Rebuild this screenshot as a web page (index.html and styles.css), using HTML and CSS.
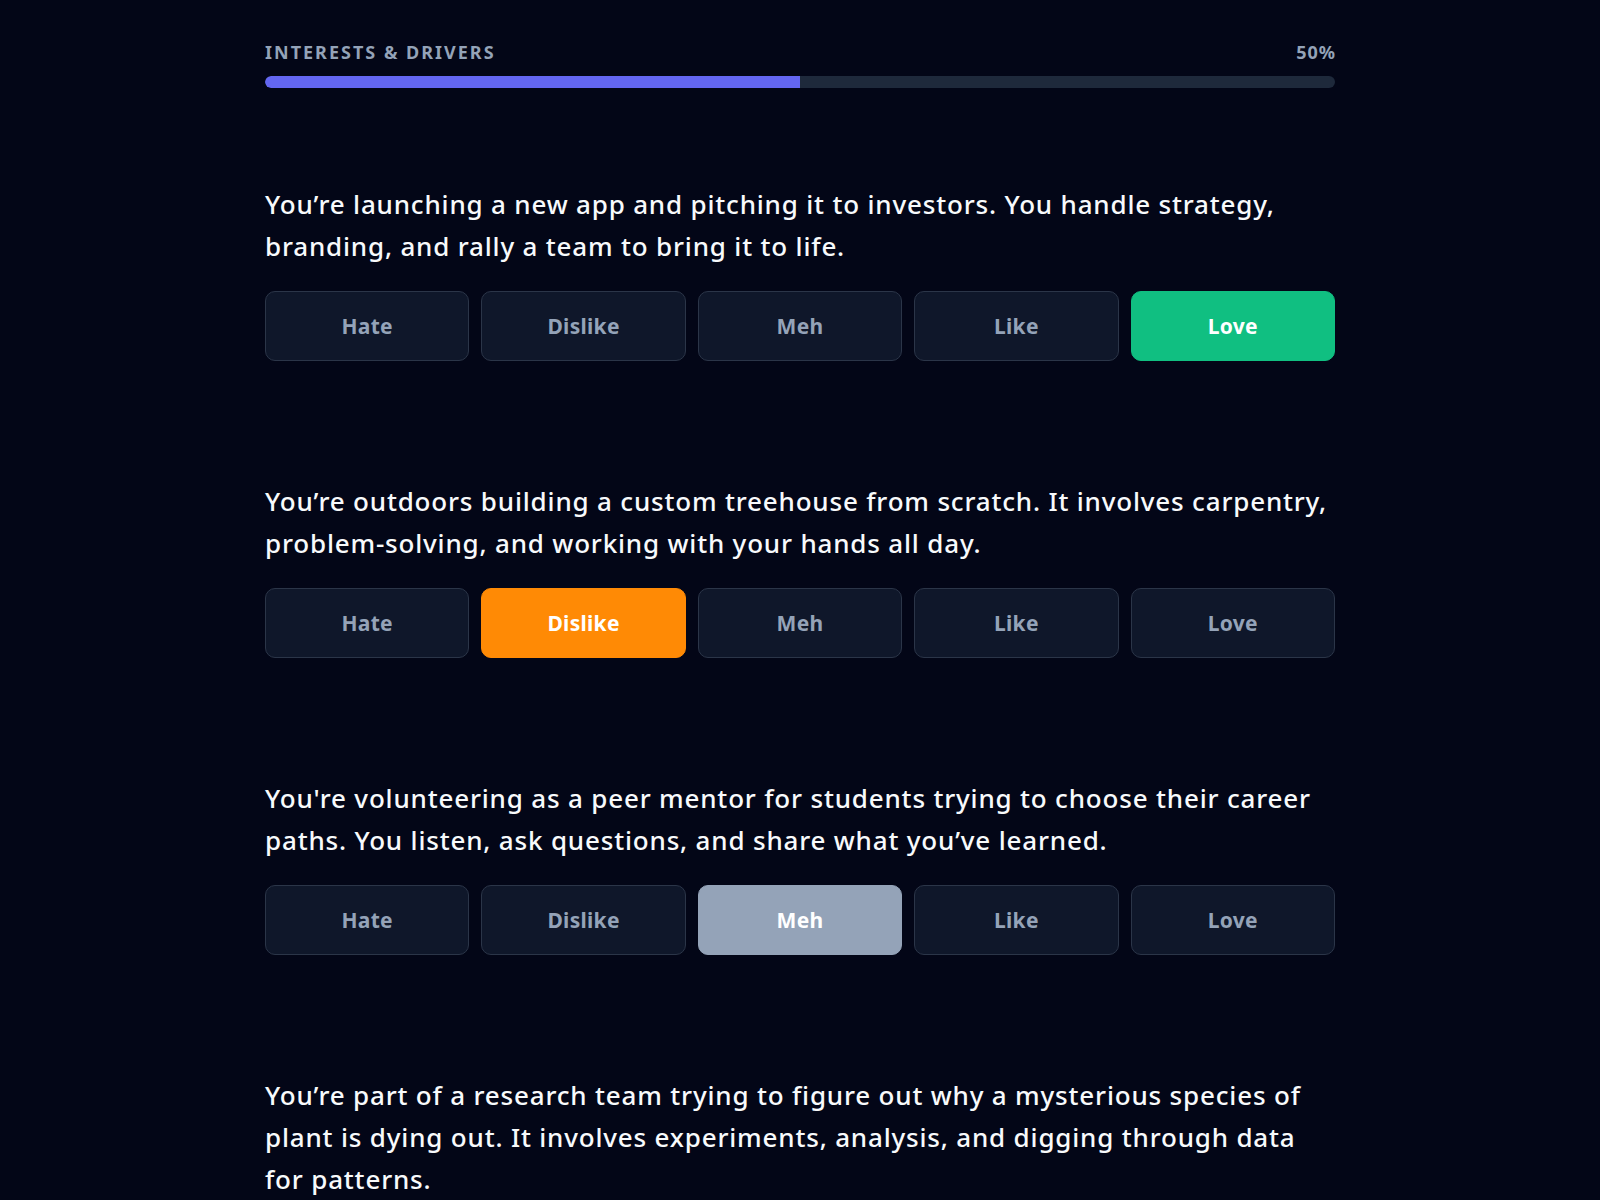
FILE: index.html
```html
<!DOCTYPE html>
<html lang="en">
<head>
<meta charset="utf-8">
<title>Interests &amp; Drivers</title>
<link rel="stylesheet" href="styles.css">
</head>
<body>
<main class="page">
  <header class="progress">
    <div class="progress-head">
      <span class="progress-label">INTERESTS &amp; DRIVERS</span>
      <span class="progress-value">50%</span>
    </div>
    <div class="progress-track"><div class="progress-fill" style="width:50%"></div></div>
  </header>

  <section class="question">
    <p class="prompt">You’re launching a new app and pitching it to investors. You handle strategy, branding, and rally a team to bring it to life.</p>
    <div class="choices">
      <button class="choice">Hate</button>
      <button class="choice">Dislike</button>
      <button class="choice">Meh</button>
      <button class="choice">Like</button>
      <button class="choice is-love">Love</button>
    </div>
  </section>

  <section class="question">
    <p class="prompt">You’re outdoors building a custom treehouse from scratch. It involves carpentry, problem-solving, and working with your hands all day.</p>
    <div class="choices">
      <button class="choice">Hate</button>
      <button class="choice is-dislike">Dislike</button>
      <button class="choice">Meh</button>
      <button class="choice">Like</button>
      <button class="choice">Love</button>
    </div>
  </section>

  <section class="question">
    <p class="prompt">You're volunteering as a peer mentor for students trying to choose their career paths. You listen, ask questions, and share what you’ve learned.</p>
    <div class="choices">
      <button class="choice">Hate</button>
      <button class="choice">Dislike</button>
      <button class="choice is-meh">Meh</button>
      <button class="choice">Like</button>
      <button class="choice">Love</button>
    </div>
  </section>

  <section class="question">
    <p class="prompt">You’re part of a research team trying to figure out why a mysterious species of plant is dying out. It involves experiments, analysis, and digging through data for patterns.</p>
    <div class="choices">
      <button class="choice">Hate</button>
      <button class="choice">Dislike</button>
      <button class="choice">Meh</button>
      <button class="choice">Like</button>
      <button class="choice">Love</button>
    </div>
  </section>
</main>
</body>
</html>
```

FILE: styles.css
```css
html, body {
  margin: 0;
  padding: 0;
  background: #030617;
}

body {
  font-family: "Noto Sans", "Open Sans", sans-serif;
  color: #f1f5f9;
  overflow: hidden;
  height: 1200px;
}

.page {
  width: 1070px;
  margin: 0 auto;
  padding-top: 42px;
}

.progress {
  margin-bottom: 95px;
}

.progress-head {
  display: flex;
  justify-content: space-between;
  align-items: center;
  height: 20px;
  margin-bottom: 14px;
}

.progress-label,
.progress-value {
  font-size: 18px;
  font-weight: 700;
  letter-spacing: 2px;
  color: #94a3b8;
}

.progress-value {
  letter-spacing: 1px;
  margin-right: -1px;
}

.progress-track {
  height: 12px;
  background: #1e293b;
  border-radius: 6px;
  overflow: hidden;
}

.progress-fill {
  height: 100%;
  background: #6366f1;
  border-radius: 6px 0 0 6px;
}

.question {
  margin-bottom: 119px;
}

.prompt {
  margin: 0 0 24px;
  font-size: 26px;
  line-height: 42px;
  font-weight: 500;
  letter-spacing: 0.82px;
  color: #f8fafc;
}

.choices {
  display: grid;
  grid-template-columns: repeat(5, 1fr);
  gap: 12px;
}

.choice {
  height: 70px;
  border: 1px solid #2b3548;
  border-radius: 10px;
  background: #0f172a;
  color: #94a3b8;
  font-family: inherit;
  font-size: 21px;
  font-weight: 700;
  letter-spacing: 0.3px;
  cursor: pointer;
}

.choice.is-love {
  background: #10bf81;
  border-color: #10bf81;
  color: #ffffff;
}

.choice.is-dislike {
  background: #ff8a05;
  border-color: #ff8a05;
  color: #ffffff;
}

.choice.is-meh {
  background: #94a3b8;
  border-color: #94a3b8;
  color: #ffffff;
}
```
